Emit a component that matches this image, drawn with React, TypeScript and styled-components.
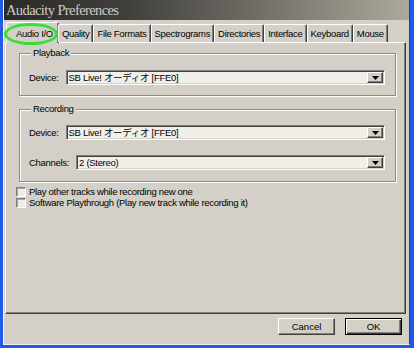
import styled, { createGlobalStyle } from 'styled-components';

const GlobalStyle = createGlobalStyle`
  html, body {
    margin: 0;
    padding: 0;
    background: #1f5ae8;
  }
  body {
    font-family: 'Liberation Sans', 'Noto Sans CJK JP', Arial, sans-serif;
    font-size: 9.5px;
    letter-spacing: -0.3px;
    color: #000;
  }
`;

const tabs = ['Audio I/O', 'Quality', 'File Formats', 'Spectrograms', 'Directories', 'Interface', 'Keyboard', 'Mouse'];

const Frame = styled.div`
  position: relative;
  width: 414px;
  height: 348px;
  box-sizing: border-box;
  padding: 0 4px 3px 3px;
  background: #1f5ae8;
  display: flex;
`;

const Window = styled.div`
  flex: 1;
  min-width: 0;
  overflow: hidden;
  display: flex;
  flex-direction: column;
  background: #d4d0c8;
  border-left: 1px solid #f4f2ee;
  border-right: 1px solid #404040;
  border-bottom: 1px solid #f4f2ee;
`;

const TitleBar = styled.div`
  height: 20px;
  flex: 0 0 20px;
  display: flex;
  align-items: center;
  padding-left: 2px;
  background: linear-gradient(90deg, #2a2a2a 0%, #403f3c 30%, #6d6a63 60%, #aca89c 100%);
  font-family: 'Liberation Serif', 'Noto Sans CJK JP', serif;
  font-size: 14.5px;
  letter-spacing: -0.6px;
  color: #cfcbc3;
`;

const Body = styled.div`
  flex: 1;
  min-width: 0;
  display: flex;
  flex-direction: column;
  padding: 2px 3px 0 1px;
`;

const TabStrip = styled.div`
  height: 20px;
  flex: 0 0 20px;
  display: flex;
  align-items: flex-end;
  padding-left: 1px;
  position: relative;
  z-index: 1;
`;

const Tab = styled.div<{ $active?: boolean }>`
  box-sizing: border-box;
  height: ${(p) => (p.$active ? '21px' : '18px')};
  margin: ${(p) => (p.$active ? '0 -1px -1px 0' : '0')};
  padding: ${(p) => (p.$active ? '0 5px 0 9px' : '0 3px')};
  display: flex;
  align-items: center;
  border-top: 1px solid #fff;
  border-left: 1px solid #fff;
  border-right: 1px solid #404040;
  border-radius: 2px 2px 0 0;
  box-shadow: inset -1px 0 0 #808080;
  background: #d4d0c8;
  white-space: nowrap;
`;

const Panel = styled.div`
  flex: 1;
  display: flex;
  flex-direction: column;
  padding: 4px 9px 0 10px;
  border-top: 1px solid #fff;
  border-left: 1px solid #fff;
  border-right: 1px solid #404040;
  border-bottom: 1px solid #404040;
  box-shadow: inset -1px -1px 0 #808080;
`;

const Group = styled.fieldset<{ $top?: number; $bottom: number }>`
  margin: ${(p) => p.$top ?? 0}px 0 0 3px;
  min-width: 0;
  padding: 0 10px ${(p) => p.$bottom}px 9px;
  border: 1px solid #8f8b84;
  box-shadow: inset 1px 1px 0 #fff, 1px 1px 0 #fff;
  display: flex;
  flex-direction: column;
`;

const Legend = styled.legend`
  margin-left: 2px;
  padding: 0 2px;
  line-height: 12px;
  background: #d4d0c8;
`;

const Row = styled.div<{ $top: number }>`
  display: flex;
  align-items: center;
  gap: 7px;
  margin-top: ${(p) => p.$top}px;
`;

const Label = styled.span`
  white-space: nowrap;
`;

const Combo = styled.div`
  flex: 1;
  height: 15px;
  box-sizing: border-box;
  display: flex;
  align-items: center;
  border: 1px solid;
  border-color: #808080 #fff #fff #808080;
  box-shadow: inset 1px 1px 0 #404040, inset -1px -1px 0 #d4d0c8;
  background: #f1efea;
  padding: 1px 1px 1px 2px;
`;

const ComboText = styled.span`
  flex: 1;
  white-space: nowrap;
  line-height: 11px;
`;

const DropButton = styled.div`
  width: 16px;
  height: 11px;
  box-sizing: border-box;
  display: flex;
  align-items: center;
  justify-content: center;
  background: #d4d0c8;
  border: 1px solid;
  border-color: #fff #404040 #404040 #fff;
  box-shadow: inset -1px -1px 0 #808080;
`;

const CheckList = styled.div`
  display: flex;
  flex-direction: column;
  margin-top: 4px;
`;

const CheckRow = styled.label`
  display: flex;
  align-items: center;
  gap: 3px;
  height: 11px;
  white-space: nowrap;
`;

const Box = styled.span`
  width: 10px;
  height: 10px;
  box-sizing: border-box;
  border: 1px solid;
  border-color: #808080 #fff #fff #808080;
  box-shadow: inset 1px 1px 0 #a8a49c;
  background: #efede8;
`;

const Footer = styled.div`
  flex: 0 0 30px;
  display: flex;
  justify-content: flex-end;
  align-items: flex-start;
  gap: 10px;
  padding: 4px 4px 0 0;
  box-sizing: border-box;
`;

const Button = styled.button<{ $default?: boolean }>`
  width: 57px;
  height: 17px;
  box-sizing: border-box;
  padding: 0;
  font: inherit;
  color: #000;
  background: #d4d0c8;
  border: 1px solid;
  border-color: ${(p) => (p.$default ? '#000' : '#fff #404040 #404040 #fff')};
  box-shadow: ${(p) =>
    p.$default
      ? 'inset 1px 1px 0 #fff, inset -1px -1px 0 #404040, inset -2px -2px 0 #808080'
      : 'inset -1px -1px 0 #808080'};
`;

const Highlight = styled.span`
  position: absolute;
  left: 4px;
  top: 23px;
  width: 54px;
  height: 22px;
  box-sizing: border-box;
  border: 3px solid #35e035;
  border-radius: 50%;
  pointer-events: none;
  z-index: 2;
`;

const Arrow = () => (
  <svg width="7" height="4" viewBox="0 0 7 4">
    <polygon points="0,0 7,0 3.5,4" fill="#000" />
  </svg>
);

const Select = ({ value }: { value: string }) => (
  <Combo>
    <ComboText>{value}</ComboText>
    <DropButton>
      <Arrow />
    </DropButton>
  </Combo>
);

export default function App() {
  return (
    <>
      <GlobalStyle />
      <Frame>
        <Window>
          <TitleBar>Audacity Preferences</TitleBar>
          <Body>
            <TabStrip>
              {tabs.map((t, i) => (
                <Tab key={t} $active={i === 0}>
                  {t}
                </Tab>
              ))}
            </TabStrip>
            <Panel>
              <Group $bottom={10}>
                <Legend>Playback</Legend>
                <Row $top={11}>
                  <Label>Device:</Label>
                  <Select value="SB Live! オーディオ [FFE0]" />
                </Row>
              </Group>
              <Group $top={7} $bottom={11}>
                <Legend>Recording</Legend>
                <Row $top={10}>
                  <Label>Device:</Label>
                  <Select value="SB Live! オーディオ [FFE0]" />
                </Row>
                <Row $top={15}>
                  <Label>Channels:</Label>
                  <Select value="2 (Stereo)" />
                </Row>
              </Group>
              <CheckList>
                <CheckRow>
                  <Box />
                  Play other tracks while recording new one
                </CheckRow>
                <CheckRow>
                  <Box />
                  Software Playthrough (Play new track while recording it)
                </CheckRow>
              </CheckList>
            </Panel>
            <Footer>
              <Button>Cancel</Button>
              <Button $default>OK</Button>
            </Footer>
          </Body>
        </Window>
        <Highlight />
      </Frame>
    </>
  );
}
